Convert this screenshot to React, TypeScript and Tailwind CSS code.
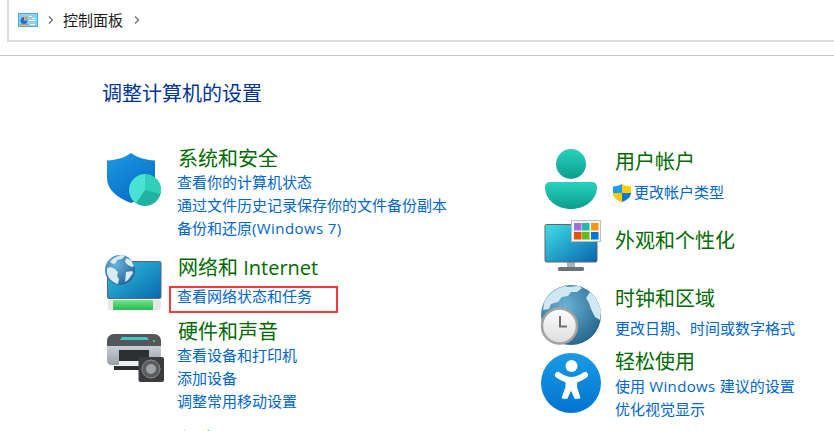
import React from "react";

const FONT = "[font-family:'Open_Sans','Noto_Sans_CJK_SC',sans-serif]";

function ShieldIcon() {
  return (
    <svg className="absolute left-0 top-0 overflow-visible" width="75" height="70" viewBox="102 146 75 70">
      <defs>
        <linearGradient id="sh" x1="0" y1="0" x2="0.6" y2="1">
          <stop offset="0" stopColor="#1a9be6" />
          <stop offset="1" stopColor="#0a6cc4" />
        </linearGradient>
      </defs>
      <path d="M131 153c6 4.500 14 7 24 7.500V178c0 11-9 19.500-24 25-15-5.500-24-14-24-25v-17.500c10-.5 18-3 24-7.500z" fill="url(#sh)" />
      <circle cx="145" cy="190" r="16" fill="#22b3a0" />
      <path d="M145 190V174a16 16 0 0 1 15.500 20z" fill="#2fcfb8" />
      <path d="M145 190V174a16 16 0 0 0-9 29.200z" fill="#48e3d2" />
    </svg>
  );
}

function NetworkIcon() {
  return (
    <svg className="absolute left-0 top-0 overflow-visible" width="75" height="60" viewBox="102 255 75 60">
      <defs>
        <linearGradient id="scr" x1="0" y1="0" x2="1" y2="1">
          <stop offset="0" stopColor="#2fc4dc" />
          <stop offset="1" stopColor="#0a68b0" />
        </linearGradient>
        <linearGradient id="grn" x1="0" y1="0" x2="0" y2="1">
          <stop offset="0" stopColor="#6fe88a" />
          <stop offset="1" stopColor="#25b850" />
        </linearGradient>
        <radialGradient id="gl1" cx="0.35" cy="0.3" r="0.8">
          <stop offset="0" stopColor="#6db4dc" />
          <stop offset="1" stopColor="#21618f" />
        </radialGradient>
      </defs>
      <rect x="107.500" y="261.500" width="53.500" height="37" rx="1.500" fill="url(#scr)" stroke="#5c6670" />
      <rect x="108" y="300" width="53" height="10" rx="2" fill="#e6e8e8" />
      <rect x="113" y="300" width="40" height="10" rx="1" fill="url(#grn)" />
      <circle cx="120" cy="270" r="15" fill="url(#gl1)" />
      <path d="M110 262c3-4 7-6 11-7l4 1-3 3-5 1-1 3-3 1zM107 268l4-1 4 2 3 3-1 4 2 3-1 5c-6-2-10-6-11-11zM126 258l5 2 3 6-2 1-4-2-3-3zM126 272l6-1 1 2-5 7-3 2z" fill="#d8ecf6" />
    </svg>
  );
}

function PrinterIcon() {
  return (
    <svg className="absolute left-0 top-0 overflow-visible" width="75" height="70" viewBox="102 319 75 70">
      <defs>
        <linearGradient id="pb" x1="0" y1="0" x2="0" y2="1">
          <stop offset="0" stopColor="#c8ced4" />
          <stop offset="1" stopColor="#98a0a8" />
        </linearGradient>
      </defs>
      <path d="M114 334h40c4 0 7 3 7 7v5h-54v-5c0-4 3-7 7-7z" fill="#53575c" />
      <path d="M122 337h25l2 3h-29z" fill="#3cc8c4" />
      <rect x="153" y="340" width="2" height="2" fill="#3bd35f" />
      <path d="M107 346h54v15c0 2-2 4-4 4h-46c-2 0-4-2-4-4z" fill="url(#pb)" />
      <rect x="119" y="350" width="30" height="13" fill="#2c2e31" />
      <rect x="119" y="361" width="24" height="5" fill="#ecedee" />
      <rect x="114" y="366" width="30" height="4" fill="#2c2e31" />
      <rect x="138.500" y="357" width="25.500" height="25" rx="2" fill="#3b3c3e" />
      <circle cx="151" cy="369" r="9" fill="#5a5c5e" stroke="#8b8d8f" strokeWidth="1" />
      <circle cx="151" cy="369" r="5" fill="#a0a2a4" />
    </svg>
  );
}

function UserIcon() {
  return (
    <svg className="absolute left-0 top-0 overflow-visible" width="75" height="70" viewBox="540 149 75 70">
      <defs>
        <linearGradient id="us" x1="0" y1="0" x2="0" y2="1">
          <stop offset="0" stopColor="#28d2bc" />
          <stop offset="1" stopColor="#0d9c8c" />
        </linearGradient>
      </defs>
      <circle cx="571" cy="164" r="15" fill="url(#us)" />
      <path d="M550 182h42c3 0 5 2 5 5 0 13-12 22-26 22s-26-9-26-22c0-3 2-5 5-5z" fill="url(#us)" />
    </svg>
  );
}

function SmallShield() {
  return (
    <svg className="shrink-0" width="18" height="18" viewBox="0 0 18 18">
      <path d="M9 0C6.500 1.500 3.500 2.300 0 2.500V9c0 4 3.500 7 9 9z" fill="#1f9ae8" />
      <path d="M9 0c2.500 1.500 5.500 2.300 9 2.500V9H9z" fill="#ffcb05" />
      <path d="M0 9h9v9C3.500 16 0 13 0 9z" fill="#ffcb05" />
      <path d="M9 9h9c0 4-3.500 7-9 9z" fill="#1477cc" />
    </svg>
  );
}

function MonitorIcon() {
  return (
    <svg className="absolute left-0 top-0 overflow-visible" width="75" height="58" viewBox="540 228 75 58">
      <defs>
        <linearGradient id="mo" x1="0" y1="0" x2="1" y2="1">
          <stop offset="0" stopColor="#3fe0e4" />
          <stop offset="1" stopColor="#0a64ae" />
        </linearGradient>
      </defs>
      <rect x="567" y="262" width="8" height="6" fill="#a9b2b8" />
      <rect x="558" y="267" width="26" height="4" rx="1.500" fill="#6b7278" />
      <rect x="545" y="224.500" width="52" height="37.500" rx="1.500" fill="url(#mo)" stroke="#5c6670" />
      <rect x="571.500" y="220.500" width="29" height="21" fill="#f4f4f4" stroke="#bdbdbd" />
      <rect x="574" y="223" width="7.500" height="7.500" fill="#a070d8" />
      <rect x="582" y="223" width="7.500" height="7.500" fill="#20b8a8" />
      <rect x="591" y="223" width="7.500" height="7.500" fill="#f5980f" />
      <rect x="574" y="232" width="7.500" height="7.500" fill="#e85010" />
      <rect x="582" y="232" width="7.500" height="7.500" fill="#68b818" />
      <rect x="591" y="232" width="7.500" height="7.500" fill="#0078d4" />
    </svg>
  );
}

function ClockIcon() {
  return (
    <svg className="absolute left-0 top-0 overflow-visible" width="75" height="63" viewBox="540 286 75 63">
      <defs>
        <radialGradient id="gl2" cx="0.4" cy="0.35" r="0.75">
          <stop offset="0" stopColor="#6bb3d6" />
          <stop offset="1" stopColor="#1f5f86" />
        </radialGradient>
        <linearGradient id="clk" x1="0" y1="0" x2="0" y2="1">
          <stop offset="0" stopColor="#ffffff" />
          <stop offset="1" stopColor="#dcdcdc" />
        </linearGradient>
      </defs>
      <circle cx="571" cy="315" r="30" fill="url(#gl2)" />
      <path d="M544 303c4-9 12-15 21-17l3 1 10-1 4 2-5 4-6 0-3 4-6 1-4 5-7 2-2 5-6 1zM590 292c6 5 10 12 11 20l-1 8-5-3-4-8-2-6-3-5z" fill="#cfe8f2" />
      <circle cx="559.500" cy="326" r="17.500" fill="url(#clk)" stroke="#a2a2a2" strokeWidth="2.500" />
      <path d="M560 316v10.500h7" fill="none" stroke="#6e6e6e" strokeWidth="2" />
    </svg>
  );
}

function AccessIcon() {
  return (
    <svg className="absolute left-0 top-0 overflow-visible" width="75" height="66" viewBox="540 349 75 66">
      <defs>
        <linearGradient id="ac" x1="0" y1="0" x2="0" y2="1">
          <stop offset="0" stopColor="#1a9be6" />
          <stop offset="1" stopColor="#0074cf" />
        </linearGradient>
      </defs>
      <circle cx="571" cy="383" r="30" fill="url(#ac)" />
      <circle cx="571.500" cy="366" r="6" fill="#fff" />
      <path d="M558 375c5 3.500 9 5 13.500 5s8.500-1.500 13.500-5" fill="none" stroke="#fff" strokeWidth="6" strokeLinecap="round" />
      <path d="M566 378h11l-.5 9 3.500 11-5 .5-4-9-4 9-5-.5 4-11z" fill="#fff" stroke="#fff" strokeLinejoin="round" strokeWidth="1" />
    </svg>
  );
}

function HomeIcon() {
  return (
    <svg width="20" height="14" viewBox="0 0 20 14" className="shrink-0">
      <rect x="0.500" y="0.500" width="19" height="13" fill="#8fd0f6" stroke="#4aa6e6" />
      <path d="M6 4a3.500 3.500 0 1 0 3.500 3.500H6z" fill="#2a6cc0" />
      <path d="M6.800 3v3.600h3.200A3.500 3.500 0 0 0 6.800 3z" fill="#e89a2a" />
      <rect x="11" y="3" width="3" height="1" fill="#fff" />
      <rect x="14" y="5" width="3" height="1" fill="#fff" />
      <rect x="11" y="7" width="6" height="1" fill="#fff" />
      <rect x="2" y="11" width="9" height="1" fill="#e8902a" />
      <rect x="12" y="11" width="5" height="1" fill="#fff" />
    </svg>
  );
}

function Chevron() {
  return (
    <svg width="6" height="8" viewBox="0 0 6 8" className="block shrink-0">
      <path d="M1 .5L4.500 4 1 7.500" fill="none" stroke="#6e6e6e" strokeWidth="1.300" />
    </svg>
  );
}

function Category({
  icon,
  title,
  links,
  className,
  linksClass,
  titleClass,
}: {
  icon?: React.ReactNode;
  title: string;
  links: React.ReactNode[];
  className: string;
  linksClass?: string;
  titleClass?: string;
}) {
  return (
    <section className={`relative flex pl-[75px] ${className}`}>
      {icon}
      <div className="flex flex-col pt-[1px]">
        <h2 className={`text-[20px] leading-[24px] text-[#006a00] whitespace-nowrap ${titleClass ?? ""}`}>{title}</h2>
        <div className={`flex flex-col ${linksClass ?? ""}`}>
          {links.map((l, i) => (
            <a key={i} className="flex h-[23px] items-center text-[15px] leading-[23px] text-[#0066cc] whitespace-nowrap">
              {l}
            </a>
          ))}
        </div>
      </div>
    </section>
  );
}

export default function App() {
  return (
    <div className={`relative h-[431px] w-[834px] overflow-hidden bg-white ${FONT}`}>
      <header className="h-[56px] border-b border-[#c6c6c6]">
        <div className="ml-[7px] flex h-[42px] items-center border-b-2 border-l-2 border-[#dcdcdc] pl-[9px]">
          <HomeIcon />
          <span className="ml-[10px]"><Chevron /></span>
          <span className="ml-[9px] text-[15px] text-[#1a1a1a]">控制面板</span>
          <span className="ml-[11px]"><Chevron /></span>
        </div>
      </header>
      <main className="pl-[102px]">
        <h1 className="mt-[24px] text-[20px] leading-[28px] text-[#003399]">调整计算机的设置</h1>
        <div className="flex">
          <div className="w-[438px] shrink-0 pt-[38px]">
            <Category
              className="h-[109px]"
              titleClass="pl-[1px]"
              icon={<ShieldIcon />}
              title="系统和安全"
              links={[
                "查看你的计算机状态",
                "通过文件历史记录保存你的文件备份副本",
                <span>备份和还原<span className="tracking-[0.4px]">(Windows 7)</span></span>,
              ]}
            />
            <Category
              className="h-[64px]"
              titleClass="pl-[1px]"
              icon={<NetworkIcon />}
              linksClass="mt-[5px]"
              title="网络和 Internet"
              links={["查看网络状态和任务"]}
            />
            <Category
              className="h-[109px]"
              titleClass="pl-[1px]"
              icon={<PrinterIcon />}
              title="硬件和声音"
              links={["查看设备和打印机", "添加设备", "调整常用移动设置"]}
            />
            <Category className="h-[40px]" titleClass="pl-[1px]" title="程序" links={[]} />
          </div>
          <div className="pt-[41px]">
            <Category
              className="h-[79px]"
              icon={<UserIcon />}
              linksClass="mt-[7px]"
              title="用户帐户"
              links={[
                <span className="-ml-[2px] flex items-center gap-[3px]">
                  <SmallShield />
                  更改帐户类型
                </span>,
              ]}
            />
            <Category className="h-[58px]" icon={<MonitorIcon />} title="外观和个性化" links={[]} />
            <Category
              className="h-[63px]"
              icon={<ClockIcon />}
              linksClass="mt-[6px]"
              title="时钟和区域"
              links={["更改日期、时间或数字格式"]}
            />
            <Category
              className="h-[70px]"
              icon={<AccessIcon />}
              linksClass="mt-[1px]"
              title="轻松使用"
              links={[
                <span>使用<span className="tracking-[0.35px]"> Windows </span>建议的设置</span>,
                "优化视觉显示",
              ]}
            />
          </div>
        </div>
      </main>
      <div className="absolute left-[169px] top-[286px] h-[27px] w-[169px] border-2 border-[#f23b3b]" />
    </div>
  );
}
